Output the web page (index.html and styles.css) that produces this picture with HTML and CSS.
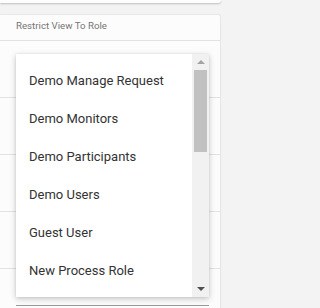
FILE: index.html
```html
<!DOCTYPE html>
<html>
<head>
<meta charset="utf-8">
<link rel="stylesheet" href="styles.css">
</head>
<body>
<div class="page">
  <div class="topcard"></div>
  <div class="panel">
    <div class="panel-header">Restrict View To Role</div>
    <div class="row"></div>
    <div class="row"></div>
    <div class="row"></div>
    <div class="row"></div>
    <div class="row last"><div class="field"></div></div>

    <div class="menu">
      <ul class="menu-list">
        <li class="menu-item">Demo Manage Request</li>
        <li class="menu-item">Demo Monitors</li>
        <li class="menu-item">Demo Participants</li>
        <li class="menu-item">Demo Users</li>
        <li class="menu-item">Guest User</li>
        <li class="menu-item">New Process Role</li>
      </ul>
      <div class="scrollbar">
        <div class="sb-btn"><span class="arrow up"></span></div>
        <div class="sb-thumb"></div>
        <div class="sb-space"></div>
        <div class="sb-btn"><span class="arrow down"></span></div>
      </div>
    </div>
  </div>
</div>
</body>
</html>
```

FILE: styles.css
```css
html, body {
  margin: 0;
  padding: 0;
  background: #f3f3f3;
}
body {
  font-family: Roboto, "Liberation Sans", Arial, sans-serif;
  width: 228px;
  height: 308px;
  overflow: hidden;
}
.page {
  width: 228px;
  height: 308px;
  overflow: hidden;
}
.topcard {
  width: 221px;
  height: 3px;
  background: #fdfdfd;
  border-radius: 0 0 3px 0;
  box-shadow: 0 1px 2px rgba(0,0,0,0.22);
}
.panel {
  position: relative;
  margin-top: 12px;
  width: 220px;
  height: 300px;
  background: #fcfcfc;
  border-right: 1px solid #e6e6e6;
  border-radius: 0 3px 0 0;
  box-shadow: 0 -1px 1px rgba(0,0,0,0.05);
}
.panel-header {
  height: 22px;
  line-height: 22px;
  padding-bottom: 3px;
  padding-left: 16px;
  font-size: 9.7px;
  color: #757575;
  border-bottom: 1px solid #e2e2e2;
}
.row {
  height: 56px;
  border-bottom: 1px solid #e2e2e2;
}
.row.last {
  border-bottom: none;
}
.field {
  margin-left: 16px;
  width: 193px;
  height: 36px;
  border-bottom: 1px solid #9a9a9a;
}
.menu {
  position: absolute;
  left: 16px;
  top: 39px;
  width: 193px;
  height: 243px;
  background: #ffffff;
  box-shadow: 0 2px 6px rgba(0,0,0,0.22), 0 0 2px rgba(0,0,0,0.08);
  display: flex;
}
.menu-list {
  list-style: none;
  margin: 0;
  padding: 8px 0 0 13px;
  flex: 1;
  overflow: hidden;
}
.menu-item {
  height: 38px;
  line-height: 38px;
  font-size: 13px;
  color: #333333;
  white-space: nowrap;
}
.scrollbar {
  width: 17px;
  background: #f1f1f1;
  display: flex;
  flex-direction: column;
}
.sb-btn {
  height: 16px;
  display: flex;
  align-items: center;
  justify-content: center;
}
.sb-thumb {
  height: 82px;
  margin: 0 2px;
  background: #c1c1c1;
}
.sb-space {
  flex: 1;
}
.arrow {
  width: 0;
  height: 0;
  border-left: 4px solid transparent;
  border-right: 4px solid transparent;
}
.arrow.up {
  border-bottom: 4px solid #a3a3a3;
}
.arrow.down {
  border-top: 4px solid #505050;
}
```
